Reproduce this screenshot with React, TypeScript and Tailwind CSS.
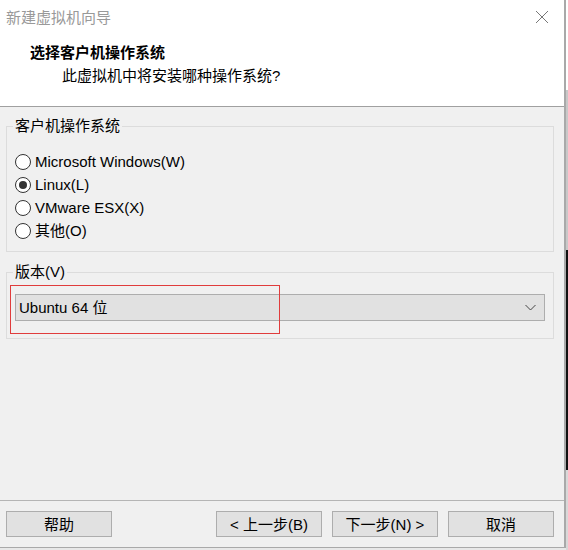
import React from "react";

const font = { fontFamily: '"Liberation Sans", "Noto Sans CJK SC", sans-serif' };

function Radio({ label, checked }: { label: string; checked?: boolean }) {
  return (
    <div className="flex h-[23px] items-center">
      <div className="ml-[8px] flex h-[16px] w-[16px] items-center justify-center rounded-full border border-[#333333] bg-white">
        {checked && <div className="h-[8px] w-[8px] rounded-full bg-[#333333]" />}
      </div>
      <span className="ml-[4px] text-[15px] leading-none text-black">{label}</span>
    </div>
  );
}

function Btn({ label, w }: { label: string; w: string }) {
  return (
    <div
      className={`flex h-[26px] ${w} items-center justify-center border border-[#adadad] bg-[#e1e1e1] text-[15px] leading-none text-black`}
    >
      {label}
    </div>
  );
}

export default function App() {
  return (
    <div className="flex h-[550px] w-[568px] bg-[#e8e8e8]" style={font}>
      <div className="flex h-[548px] w-[566px] flex-col border-b border-r-2 border-[#a9a9a9] bg-[#f0f0f0]">
        {/* header */}
        <div className="flex h-[107px] flex-col border-b border-[#a0a0a0] bg-white">
          <div className="flex h-[34px] items-center justify-between pl-[6px] pr-[15px]">
            <span className="text-[15px] leading-none text-[#999999]">新建虚拟机向导</span>
            <svg width="14" height="14" viewBox="0 0 14 14">
              <path d="M1 1 L13 13 M13 1 L1 13" stroke="#777" strokeWidth="1" fill="none" />
            </svg>
          </div>
          <div className="ml-[30px] mt-[11px] text-[15px] font-bold leading-none text-black">选择客户机操作系统</div>
          <div className="ml-[62px] mt-[8px] text-[15px] leading-none text-black">此虚拟机中将安装哪种操作系统?</div>
        </div>

        {/* group 1 */}
        <fieldset className="mx-[6px] mt-[10px] h-[135px] w-[548px] border border-[#dcdcdc] pt-[15px]">
          <legend className="ml-[6px] px-[2px] text-[15px] leading-[18px] text-black">客户机操作系统</legend>
          <Radio label="Microsoft Windows(W)" />
          <Radio label="Linux(L)" checked />
          <Radio label="VMware ESX(X)" />
          <Radio label="其他(O)" />
        </fieldset>

        {/* group 2 */}
        <fieldset className="relative mx-[6px] mt-[11px] h-[76px] w-[548px] border border-[#dcdcdc]">
          <legend className="ml-[6px] px-[2px] text-[15px] leading-[18px] text-black">版本(V)</legend>
          <div className="ml-[8px] mt-[13px] flex h-[27px] w-[530px] items-center justify-between border border-[#adadad] bg-[#e1e1e1] pl-[3px] pr-[8px]">
            <span className="text-[15px] leading-none text-black">Ubuntu 64 位</span>
            <svg width="11" height="7" viewBox="0 0 11 7">
              <path d="M0.5 1 L5.5 6 L10.5 1" stroke="#444" strokeWidth="1" fill="none" />
            </svg>
          </div>
          <div className="absolute left-[3px] top-[4px] h-[49px] w-[270px] border border-[#e03c3c]" />
        </fieldset>

        <div className="flex-1" />

        {/* footer */}
        <div className="flex h-[47px] flex-col border-t border-[#b5b5b5]">
          <div className="mt-[10px] flex pl-[6px]">
            <Btn label="帮助" w="w-[106px]" />
            <div className="ml-[104px]">
              <Btn label="< 上一步(B)" w="w-[106px]" />
            </div>
            <div className="ml-[10px]">
              <Btn label="下一步(N) >" w="w-[106px]" />
            </div>
            <div className="ml-[10px]">
              <Btn label="取消" w="w-[106px]" />
            </div>
          </div>
        </div>
      </div>
      <div className="flex w-[2px] flex-col">
        <div className="h-[90px] bg-white" />
        <div className="h-[160px] bg-[#c8c8c8]" />
        <div className="h-[220px] bg-[#111111]" />
        <div className="flex-1 bg-[#d8d8d8]" />
      </div>
    </div>
  );
}
